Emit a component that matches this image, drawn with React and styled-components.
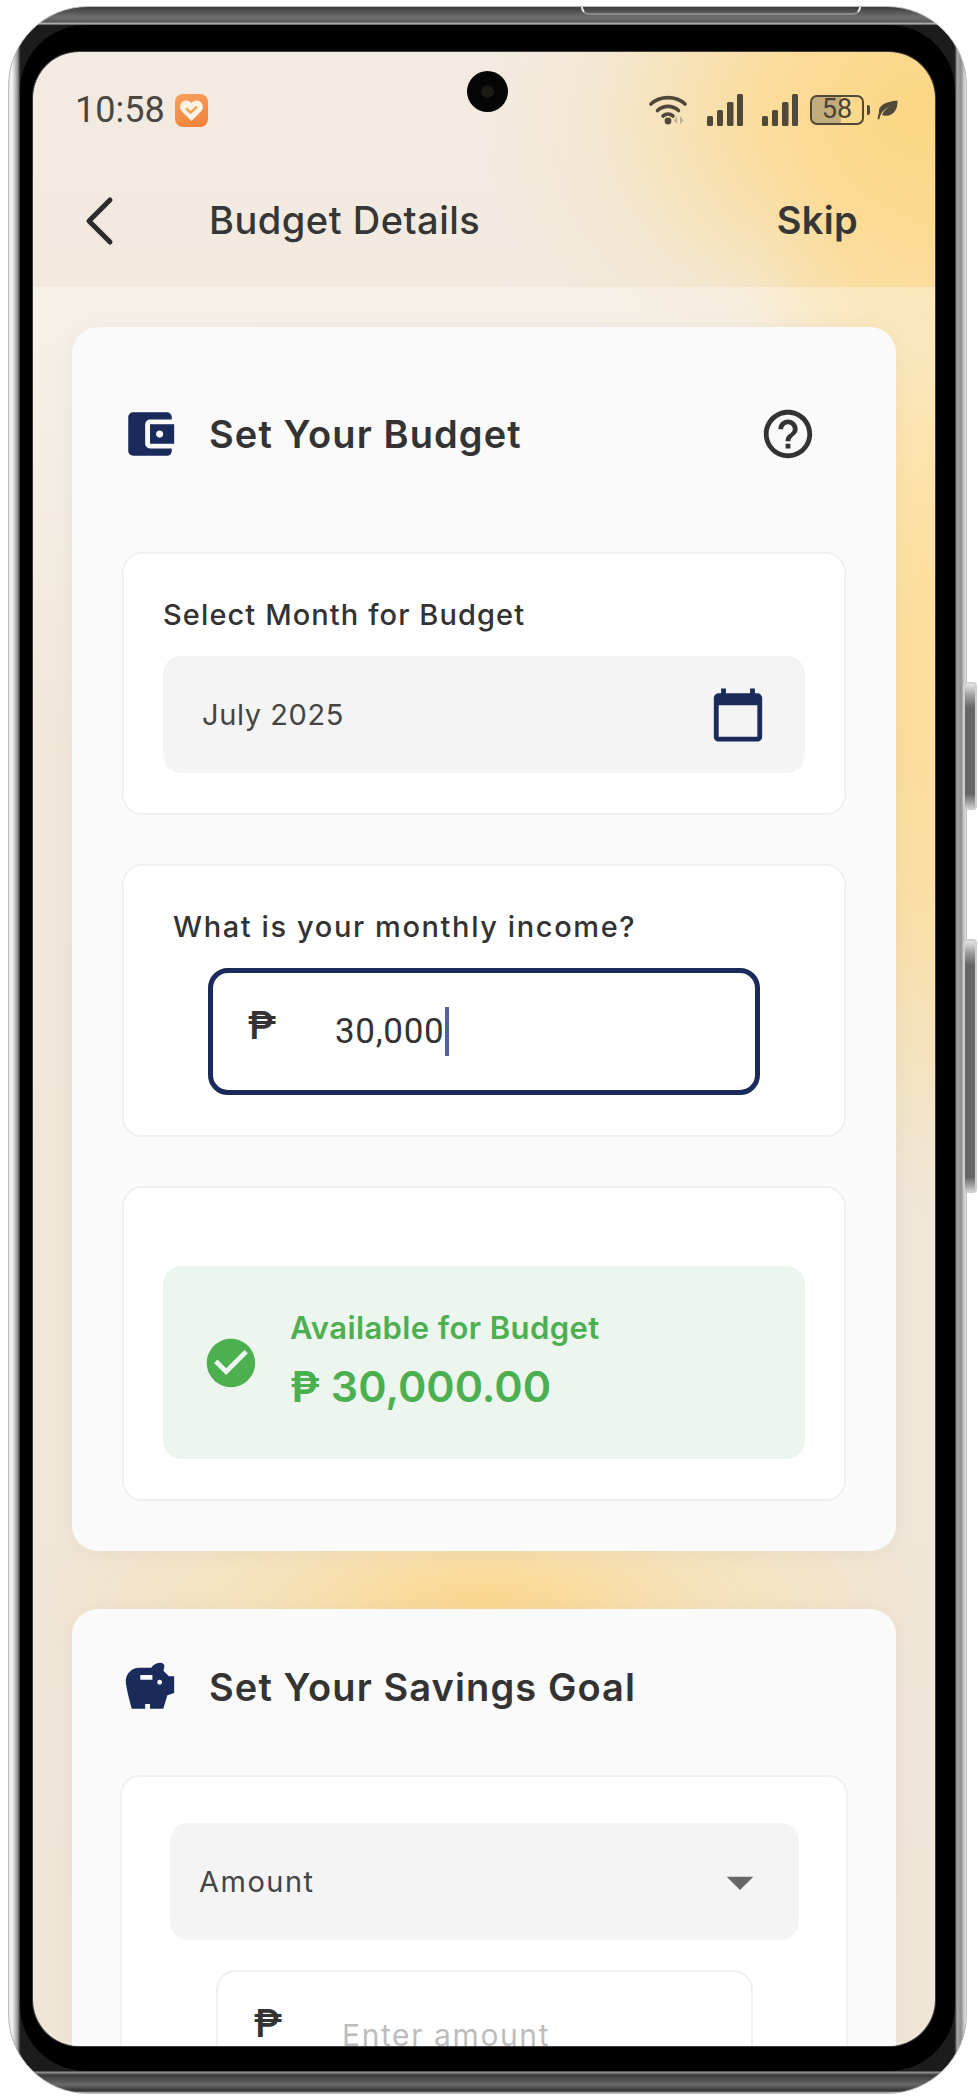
import styled, { createGlobalStyle } from "styled-components"
import { MdAccountBalanceWallet, MdCalendarToday, MdCheckCircle, MdHelpOutline, MdSavings, MdArrowDropDown } from "react-icons/md"

const GlobalStyle = createGlobalStyle`
  html, body {
    margin: 0;
    background: #fff;
  }
  * {
    box-sizing: border-box;
  }
`

const navy = "#1a2b5b"
const ink = "#333333"
const sans = `Inter, "Noto Sans", sans-serif`

const Page = styled.div`
  width: 978px;
  height: 2100px;
  padding: 6px 11px 6px 8px;
  overflow: hidden;
  font-family: ${sans};
  color: ${ink};
`

const Shell = styled.div`
  position: relative;
  height: 100%;
  padding: 18px 11px 22px 11px;
  border-radius: 80px;
  border: 1px solid #bdbdbd;
  background:
    linear-gradient(90deg, #e6e6e6 0, #f4f4f4 3px, #b4b4b4 7px, #8a8a8a 9px, #2a2a2a 11px, transparent 12px, transparent calc(100% - 12px), #2a2a2a calc(100% - 11px), #a8a8a8 calc(100% - 9px), #8c8c8c calc(100% - 5px), #c9c9c9 calc(100% - 2px), #e4e4e4 100%),
    linear-gradient(180deg, #3c3c3c 0, #6e6e6e 10px, #5a5a5a 15px, #c8c8c8 17px, #1c1c1c 18px, #1c1c1c calc(100% - 22px), #9a9a9a calc(100% - 21px), #3a3a3a calc(100% - 18px), #6a6a6a calc(100% - 8px), #303030 calc(100% - 2px), #c8c8c8 100%);
`

const TopNotch = styled.div`
  position: absolute;
  top: 0;
  left: 572px;
  width: 280px;
  height: 8px;
  border: 2px solid #eee;
  border-top: 0;
  border-bottom-color: #8a8a8a;
  border-radius: 0 0 22px 22px;
`

const SideKey = styled.div`
  position: absolute;
  right: -11px;
  top: ${(p) => p.$top}px;
  width: 14px;
  height: ${(p) => p.$height}px;
  border-radius: 4px;
  border: 2px solid #cfcfcf;
  background: linear-gradient(180deg, #e4e4e4 0, #9c9c9c 12px, #666 24px, #666 calc(100% - 14px), #c8c8c8 100%);
`

const Bezel = styled.div`
  height: 100%;
  padding: 27px 20px 25px 13px;
  border-radius: 66px;
  background: #000;
`

const Screen = styled.div`
  position: relative;
  height: 100%;
  border-radius: 46px;
  overflow: hidden;
  box-shadow: 0 0 0 1px #3c3c3c;
  background:
    radial-gradient(ellipse 460px 320px at 100% 3%, #fdd683 0, #fcd98cd9 35%, #f9e0ad44 75%, #f9e0ad00 100%),
    radial-gradient(ellipse 210px 620px at 100% 27%, #fdd98a 0, #fcdc99cc 55%, #f9e0ad00 100%),
    radial-gradient(ellipse 460px 140px at 50% 77.500%, #fbd68a 0, #fadfa899 50%, #f9e0ad00 100%),
    linear-gradient(180deg, #f3ebe2 0, #f2eadf 260px, #f0e6d8 700px);
`

const Camera = styled.div`
  position: absolute;
  top: 19px;
  left: 434px;
  width: 41px;
  height: 41px;
  border-radius: 50%;
  background: #050505;
  &::after {
    content: "";
    position: absolute;
    inset: 14px;
    border-radius: 50%;
    background: #1d1a14;
  }
`

const StatusBar = styled.div`
  display: flex;
  align-items: center;
  justify-content: space-between;
  padding: 38px 37px 0 42px;
  height: 78px;
`

const Clock = styled.div`
  display: flex;
  align-items: center;
  gap: 10px;
  font: 400 36px Roboto, sans-serif;
  color: #4a4742;
`

const AppBadge = styled.div`
  display: flex;
  align-items: center;
  justify-content: center;
  width: 33px;
  height: 33px;
  border-radius: 8px;
  background: linear-gradient(160deg, #f9a05c, #f0813a);
`

const StatusIcons = styled.div`
  display: flex;
  align-items: center;
`

const Battery = styled.div`
  width: 54px;
  height: 30px;
  margin-left: 12px;
  border: 2.5px solid #504838;
  border-radius: 7px;
  background: linear-gradient(90deg, #c2ac7b 58%, transparent 58%);
  font: 400 27px/25px Roboto, sans-serif;
  text-align: center;
  color: #4a4334;
`

const BatteryNub = styled.div`
  width: 3px;
  height: 10px;
  margin: 0 7px 0 3px;
  border-radius: 0 2px 2px 0;
  background: #504838;
`

const Header = styled.div`
  display: flex;
  align-items: center;
  height: 157px;
  padding: 24px 77px 0 51px;
`

const BackIcon = styled.svg`
  width: 30px;
  height: 50px;
  margin-right: 95px;
  flex: none;
`

const HeaderTitle = styled.div`
  flex: 1;
  margin-top: -2px;
  font-size: 38px;
  font-weight: 500;
  letter-spacing: 0.5px;
  color: #363636;
`

const SkipLink = styled.div`
  margin-top: -2px;
  font-size: 38px;
  font-weight: 600;
  letter-spacing: 0.3px;
  color: #363636;
`

const Content = styled.div`
  padding: 40px 39px 0;
  height: 100%;
  background: linear-gradient(180deg, rgba(255, 255, 255, 0.32) 0, rgba(255, 255, 255, 0.05) 480px, rgba(255, 255, 255, 0) 100%);
  display: flex;
  flex-direction: column;
  gap: 58px;
`

const Card = styled.section`
  flex: none;
  padding: ${(p) => p.$top}px 50px 50px;
  border-radius: 26px;
  background: #fafafa;
  box-shadow: 0 2px 22px rgba(60, 40, 0, 0.05);
`

const CardHeader = styled.div`
  display: flex;
  align-items: center;
  height: 60px;
  margin-bottom: ${(p) => p.$gap}px;
  padding-right: 29px;
`

const CardIcon = styled.div`
  display: flex;
  align-items: center;
  justify-content: center;
  width: 58px;
  margin: 0 30px 0 -1px;
  color: ${navy};
  font-size: 58px;
`

const CardTitle = styled.h2`
  flex: 1;
  margin: 0;
  font-size: 38px;
  font-weight: 600;
  letter-spacing: 1.1px;
  color: ${ink};
`

const HelpIcon = styled(MdHelpOutline)`
  font-size: 58px;
  color: ${ink};
`

const Stack = styled.div`
  display: flex;
  flex-direction: column;
  gap: 49px;
`

const Panel = styled.div`
  padding: ${(p) => p.$top || 40}px 39px 40px;
  border-radius: 20px;
  border: 2px solid #f0f0f0;
  background: #fff;
`

const FieldLabel = styled.div`
  height: 42px;
  margin: 0 0 20px ${(p) => p.$indent || 0}px;
  font-size: 29px;
  font-weight: 500;
  line-height: 42px;
  letter-spacing: ${(p) => p.$track || 1.1}px;
  color: ${ink};
`

const FillField = styled.div`
  display: flex;
  align-items: center;
  justify-content: space-between;
  height: 117px;
  padding: 0 ${(p) => p.$right || 38}px 0 ${(p) => p.$left || 39}px;
  border-radius: 18px;
  background: #f4f4f4;
  font-size: 29px;
  letter-spacing: ${(p) => p.$track || 0.6}px;
  color: #444;
`

const CalendarIcon = styled(MdCalendarToday)`
  font-size: 58px;
  color: ${navy};
`

const ArrowIcon = styled(MdArrowDropDown)`
  font-size: 64px;
  margin-right: -20px;
  color: #666;
`

const MoneyInput = styled.div`
  display: flex;
  align-items: center;
  height: 127px;
  margin: 0 45px;
  padding: 0 0 0 35px;
  border-radius: 20px;
  border: ${(p) => (p.$focused ? `5px solid ${navy}` : "2px solid #f0f0f0")};
`

const PesoSign = styled.span`
  width: 87px;
  margin-top: -12px;
  font: 500 38px Roboto, sans-serif;
  color: ${ink};
`

const MoneyValue = styled.span`
  font: 400 35px Roboto, sans-serif;
  letter-spacing: 0.7px;
  color: #333;
`

const Caret = styled.span`
  width: 4px;
  height: 49px;
  margin-left: 1px;
  background: #4f63a0;
`

const Placeholder = styled.span`
  margin: 3px 0 0 1px;
  font-size: 30px;
  letter-spacing: 1.6px;
  color: #bdbdbd;
`

const AvailableBox = styled.div`
  display: flex;
  align-items: center;
  gap: 30px;
  height: 193px;
  padding-left: 39px;
  border-radius: 18px;
  background: #edf6ee;
  color: #4caf50;
`

const CheckIcon = styled(MdCheckCircle)`
  font-size: 58px;
  flex: none;
`

const AvailableText = styled.div`
  padding-bottom: 3px;
`

const AvailableLabel = styled.div`
  font-size: 31px;
  font-weight: 600;
  letter-spacing: 0.4px;
  line-height: 40px;
`

const AvailableAmount = styled.div`
  margin-top: 10px;
  font-size: 43px;
  font-weight: 600;
  line-height: 56px;
`

const SavingsPanel = styled.div`
  margin: 0 -2px;
  padding: 46px 47px 0 48px;
  border-radius: 20px 20px 0 0;
  border: 2px solid #f0f0f0;
  background: #fff;
  display: flex;
  flex-direction: column;
  gap: 30px;
`

const AmountBox = styled(MoneyInput)`
  margin: 0 46px 0 46px;
  height: 160px;
  padding: 42px 0 0 36px;
  align-items: flex-start;
`

const HeartBadge = () => (
  <svg width="25" height="23" viewBox="0 0 24 22">
    <path d="M12 21 2.6 11.6C-.6 8.2 1.4 1.5 7 1.5c2.2 0 3.900 1 5 2.600 1.100-1.600 2.800-2.600 5-2.600 5.600 0 7.600 6.700 4.400 10.100z" fill="#fff3e6" />
    <path d="M7.500 9.500l3.500 3.500 5.500-5" fill="none" stroke="#f6a04e" strokeWidth="2.400" strokeLinecap="round" strokeLinejoin="round" />
  </svg>
)

const WifiIcon = () => (
  <svg width="40" height="32" viewBox="0 0 40 32">
    <g fill="none" stroke="#504838" strokeWidth="3.600" strokeLinecap="round">
      <path d="M2 10C11 1.500 27 1.500 36 10" />
      <path d="M8.500 16.500c6-5.500 15-5.500 21 0" />
      <path d="M14 22c3-2.500 7-2.500 10 0" />
    </g>
    <circle cx="19" cy="27" r="3.400" fill="#504838" />
    <path d="M28 22v8l-3-3.500zM31 22v8l3.500-3.500z" fill="#b8b09a" />
  </svg>
)

const SignalIcon = ({ ml }) => (
  <svg width="36" height="32" viewBox="0 0 36 32" style={{ marginLeft: ml }}>
    <g fill="#504838">
      <rect x="0" y="22" width="6" height="10" rx="1.500" />
      <rect x="10" y="16" width="6" height="16" rx="1.500" />
      <rect x="20" y="8" width="6.500" height="24" rx="1.500" />
      <rect x="30" y="0" width="6" height="32" rx="1.500" />
    </g>
  </svg>
)

const LeafIcon = () => (
  <svg width="21" height="20" viewBox="0 0 21 20">
    <path d="M20.500 0.500C21 9 17 15.500 9 15.800 7.500 15.800 6 15.400 5 14.700 7 10.500 10 8 14 6 9.500 7.500 5.500 10.500 3.300 15.500L2.200 19.500 0.500 19C1 16.500 1.300 14.500 2 12.600 0.800 6 8 1.500 20.500 0.500z" fill="#504838" />
  </svg>
)

const Peso = "\u20B1"

const App = () => {
  return (
    <Page>
      <GlobalStyle />
      <Shell>
        <TopNotch />
        <SideKey $top={675} $height={128} />
        <SideKey $top={932} $height={254} />
        <Bezel>
          <Screen>
            <Camera />
            <StatusBar>
              <Clock>
                10:58
                <AppBadge>
                  <HeartBadge />
                </AppBadge>
              </Clock>
              <StatusIcons>
                <WifiIcon />
                <SignalIcon ml={18} />
                <SignalIcon ml={19} />
                <Battery>58</Battery>
                <BatteryNub />
                <LeafIcon />
              </StatusIcons>
            </StatusBar>
            <Header>
              <BackIcon viewBox="0 0 30 50">
                <path d="M26 4 5 25l21 21" fill="none" stroke="#2b2b2b" strokeWidth="5" strokeLinecap="round" strokeLinejoin="round" />
              </BackIcon>
              <HeaderTitle>Budget Details</HeaderTitle>
              <SkipLink>Skip</SkipLink>
            </Header>
            <Content>
              <Card $top={77}>
                <CardHeader $gap={88}>
                  <CardIcon>
                    <MdAccountBalanceWallet />
                  </CardIcon>
                  <CardTitle>Set Your Budget</CardTitle>
                  <HelpIcon />
                </CardHeader>
                <Stack>
                  <Panel>
                    <FieldLabel>Select Month for Budget</FieldLabel>
                    <FillField>
                      July 2025
                      <CalendarIcon />
                    </FillField>
                  </Panel>
                  <Panel>
                    <FieldLabel $indent={10} $track={1.6}>What is your monthly income?</FieldLabel>
                    <MoneyInput $focused>
                      <PesoSign>{Peso}</PesoSign>
                      <MoneyValue>30,000</MoneyValue>
                      <Caret />
                    </MoneyInput>
                  </Panel>
                  <Panel $top={78}>
                    <AvailableBox>
                      <CheckIcon />
                      <AvailableText>
                        <AvailableLabel>Available for Budget</AvailableLabel>
                        <AvailableAmount>{Peso} 30,000.00</AvailableAmount>
                      </AvailableText>
                    </AvailableBox>
                  </Panel>
                </Stack>
              </Card>
              <Card $top={48}>
                <CardHeader $gap={58}>
                  <CardIcon>
                    <MdSavings />
                  </CardIcon>
                  <CardTitle>Set Your Savings Goal</CardTitle>
                </CardHeader>
                <SavingsPanel>
                  <FillField $left={29} $right={47} $track={1.5}>
                    Amount
                    <ArrowIcon />
                  </FillField>
                  <AmountBox>
                    <PesoSign>{Peso}</PesoSign>
                    <Placeholder>Enter amount</Placeholder>
                  </AmountBox>
                </SavingsPanel>
              </Card>
            </Content>
          </Screen>
        </Bezel>
      </Shell>
    </Page>
  )
}

export default App
